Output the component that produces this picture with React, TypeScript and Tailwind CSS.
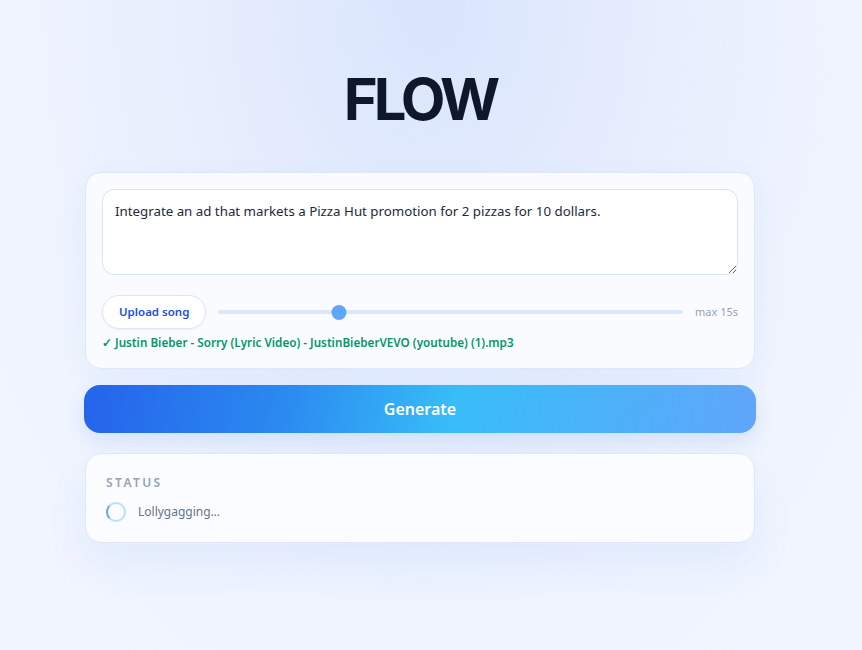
import React, { useState } from 'react';

const App: React.FC = () => {
  const [prompt, setPrompt] = useState(
    'Integrate an ad that markets a Pizza Hut promotion for 2 pizzas for 10 dollars.'
  );
  const [duration, setDuration] = useState(4);

  return (
    <div
      className="min-h-[650px] w-full pr-[22px] bg-[radial-gradient(ellipse_at_50%_0%,#d9e5fd_0%,#e6edfd_35%,#eff4fe_70%,#f1f5ff_100%)] flex flex-col items-center"
      style={{ fontFamily: '"Noto Sans", "Open Sans", sans-serif' }}
    >
      {/* TITLE */}
      <h1
        className="mt-[63px] mb-[37px] text-[58px] leading-[72px] font-bold tracking-[-0.07em] text-[#0f172a]"
        style={{ fontFamily: 'Inter, "Liberation Sans", sans-serif' }}
      >
        FLOW
      </h1>

      <div className="w-[672px] flex flex-col">
        {/* PROMPT CARD */}
        <div className="mx-px rounded-2xl border border-[#dfe7fa] bg-[#fafbff] p-4 shadow-[0_10px_30px_rgba(59,130,246,0.06)]">
          <textarea
            value={prompt}
            onChange={(e) => setPrompt(e.target.value)}
            className="block w-full h-[86px] rounded-xl border border-[#d6e4fb] bg-white px-3 py-[11px] text-[13.3px] leading-5 text-[#1e293b] outline-none resize-y"
            aria-label="Prompt"
          />

          <div className="mt-5 flex items-center gap-3">
            <button
              type="button"
              className="h-[34px] px-4 rounded-full border border-[#dbe6fb] bg-white text-[11.5px] font-semibold text-[#1d4ed8] shadow-[0_1px_2px_rgba(59,130,246,0.08)]"
            >
              Upload song
            </button>

            <div className="relative flex-1 h-[34px] flex items-center">
              <div className="w-full h-1 rounded-full bg-[#dbe7fb]"></div>
              <div
                className="absolute w-[15px] h-[15px] rounded-full bg-[#60a5fa] -translate-x-1/2"
                style={{ left: `${(duration / 15) * 100 * 0.97}%` }}
              ></div>
              <input
                type="range"
                min={0}
                max={15}
                value={duration}
                onChange={(e) => setDuration(Number(e.target.value))}
                className="absolute inset-0 opacity-0 cursor-pointer"
                aria-label="Duration"
              />
            </div>

            <span className="text-[11px] text-[#94a3b8]">max 15s</span>
          </div>

          <p className="mt-[5px] text-[11.7px] font-semibold text-[#059669]">
            ✓ Justin Bieber - Sorry (Lyric Video) - JustinBieberVEVO (youtube) (1).mp3
          </p>
        </div>

        {/* GENERATE */}
        <button
          type="button"
          className="mt-4 h-12 w-full rounded-2xl bg-[linear-gradient(100deg,#2563eb_0%,#2b8af0_30%,#38bdf8_55%,#60a5fa_100%)] text-[16px] font-semibold text-white shadow-[0_8px_20px_rgba(59,130,246,0.15)]"
        >
          Generate
        </button>

        {/* STATUS */}
        <div className="mt-5 mx-px rounded-2xl border border-[#dfe7fa] bg-[#fbfcff] px-5 pt-5 pb-5 shadow-[0_20px_40px_rgba(59,130,246,0.08)]">
          <h2 className="text-[12px] font-semibold tracking-[0.2em] text-[#94a3b8]">STATUS</h2>
          <div className="mt-2.5 flex items-center gap-3">
            <div className="w-5 h-5 rounded-full border-2 border-[#bfdbfe] border-l-[#60a5fa]"></div>
            <span className="text-[12px] text-[#64748b]">Lollygagging…</span>
          </div>
        </div>
      </div>
    </div>
  );
};

export default App;
